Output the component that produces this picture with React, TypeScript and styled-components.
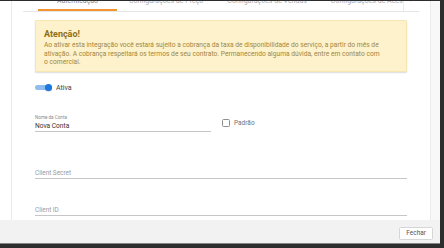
import { useLayoutEffect, useRef } from "react";
import styled, { createGlobalStyle } from "styled-components";
import { ChevronLeft, ChevronRight } from "lucide-react";

const tabs = [
  "Autenticação",
  "Configurações de Preço",
  "Configurações de Vendas",
  "Configurações de Acesso",
];

const App = () => {
  const bodyRef = useRef<HTMLDivElement>(null);

  useLayoutEffect(() => {
    if (bodyRef.current) bodyRef.current.scrollTop = 95;
  }, []);

  return (
    <>
      <GlobalStyle />
      <Page>
        <Modal>
          <ModalBody ref={bodyRef}>
            <Content>
              <Panel>
                <DialogHeader>
                  <DialogTitle>Configurar Integração</DialogTitle>
                </DialogHeader>

                <TabBar>
                  <ScrollButton $disabled>
                    <ChevronLeft size={8} strokeWidth={2} />
                  </ScrollButton>
                  <TabScroller>
                    {tabs.map((tab, i) => (
                      <Tab key={tab} $active={i === 0}>
                        {tab}
                      </Tab>
                    ))}
                  </TabScroller>
                  <ScrollButton $bordered>
                    <ChevronRight size={8} strokeWidth={2} />
                  </ScrollButton>
                </TabBar>

                <Section>
                  <Alert>
                    <AlertTitle>Atenção!</AlertTitle>
                    <AlertText>
                      Ao ativar esta integração você estará sujeito a cobrança da
                      taxa de disponibilidade do serviço, a partir do mês de
                      ativação. A cobrança respeitará os termos de seu contrato.
                      Permanecendo alguma dúvida, entre em contato com{" "}
                      <NoWrap>o comercial.</NoWrap>
                    </AlertText>
                  </Alert>

                  <SwitchRow>
                    <SwitchTrack>
                      <SwitchThumb />
                    </SwitchTrack>
                    <SwitchLabel>Ativa</SwitchLabel>
                  </SwitchRow>

                  <FieldRow>
                    <Field $width="176px">
                      <FieldLabel>Nome da Conta</FieldLabel>
                      <Input defaultValue="Nova Conta" />
                    </Field>
                    <CheckLabel>
                      <CheckBox />
                      <span>Padrão</span>
                    </CheckLabel>
                  </FieldRow>

                  <PlainInput $gap="37px" placeholder="Client Secret" />
                  <PlainInput $gap="27px" placeholder="Client ID" />
                  <PlainInput $gap="27px" placeholder="Client Key" />
                </Section>
              </Panel>
            </Content>
          </ModalBody>

          <Footer>
            <FooterButton>Fechar</FooterButton>
          </Footer>
        </Modal>
      </Page>
    </>
  );
};

export default App;

const GlobalStyle = createGlobalStyle`
  html, body {
    margin: 0;
    padding: 0;
  }

  body {
    width: 444px;
    height: 248px;
    overflow: hidden;
    background: #2d2d2d;
    font-family: Roboto, "Liberation Sans", Arial, sans-serif;
  }

  * {
    box-sizing: border-box;
  }
`;

const Page = styled.div`
  display: flex;
  height: 248px;
  padding: 1px 4px 5px 0;
`;

const Modal = styled.div`
  width: 440px;
  display: flex;
  flex-direction: column;
  background: #fff;
  box-shadow: 0 1px 0 #858585;
`;

const ModalBody = styled.div`
  flex: 1;
  min-height: 0;
  overflow-y: scroll;

  &::-webkit-scrollbar {
    width: 10px;
  }

  &::-webkit-scrollbar-track {
    background: #f1f1f1;
  }

  &::-webkit-scrollbar-thumb {
    background: #c1c1c1;
  }

  &::-webkit-scrollbar-button:vertical:start:increment,
  &::-webkit-scrollbar-button:vertical:end:decrement {
    display: none;
  }

  &::-webkit-scrollbar-button:vertical:start:decrement {
    display: block;
    height: 10px;
    background-color: #f1f1f1;
    background-image: linear-gradient(to bottom right, transparent 50%, #a3a3a3 50%),
      linear-gradient(to bottom left, transparent 50%, #a3a3a3 50%);
    background-size: 3px 3px;
    background-repeat: no-repeat;
    background-position: 2px 3px, 5px 3px;
  }

  &::-webkit-scrollbar-button:vertical:end:increment {
    display: block;
    height: 10px;
    background-color: #f1f1f1;
    background-image: linear-gradient(to top right, transparent 50%, #a3a3a3 50%),
      linear-gradient(to top left, transparent 50%, #a3a3a3 50%);
    background-size: 3px 3px;
    background-repeat: no-repeat;
    background-position: 2px 3px, 5px 3px;
  }
`;

const Content = styled.div`
  padding: 0 9px 0 11px;
  background: linear-gradient(to left, #f8f8f8 9px, #fff 9px);
`;

const Panel = styled.div`
  background: #fff;
  border-left: 1px solid #ebebeb;
  border-right: 1px solid #ebebeb;
  padding: 0 11px 40px;
`;

const DialogHeader = styled.div`
  height: 88px;
  display: flex;
  align-items: center;
`;

const DialogTitle = styled.h2`
  margin: 0;
  font-size: 11px;
  font-weight: 500;
  color: #444;
`;

const TabBar = styled.div`
  display: flex;
  height: 18px;
  border-bottom: 1px solid #e6e6e6;
`;

const ScrollButton = styled.div<{ $disabled?: boolean; $bordered?: boolean }>`
  flex: none;
  width: ${(p) => (p.$bordered ? "16px" : "15px")};
  display: flex;
  align-items: center;
  justify-content: center;
  padding-bottom: 8px;
  color: ${(p) => (p.$disabled ? "#cfcfcf" : "#8a8a8a")};
  border-left: ${(p) => (p.$bordered ? "1px solid #ececec" : "none")};
`;

const TabScroller = styled.div`
  flex: 1;
  min-width: 0;
  display: flex;
  overflow: hidden;
`;

const Tab = styled.div<{ $active?: boolean }>`
  flex: none;
  min-width: 79px;
  height: 17px;
  padding: 0 12px;
  line-height: 14px;
  font-size: 7px;
  text-align: center;
  white-space: nowrap;
  color: ${(p) => (p.$active ? "#8c8c8c" : "#ababab")};
  border-bottom: 2px solid ${(p) => (p.$active ? "#f39433" : "transparent")};
`;

const Section = styled.div`
  padding: 8px 12px 0;
  display: flex;
  flex-direction: column;
`;

const Alert = styled.div`
  padding: 8px 9px 4px 8px;
  background: #fdf2cc;
  border: 1px solid #f5e6b2;
  border-radius: 1px;
  box-shadow: 0 1px 1.5px rgba(0, 0, 0, 0.14);
`;

const AlertTitle = styled.div`
  font-size: 9px;
  line-height: 11px;
  font-weight: 700;
  color: #8e6f18;
`;

const AlertText = styled.div`
  margin-top: 1px;
  font-size: 6.7px;
  line-height: 8.5px;
  color: #a3873d;
`;

const NoWrap = styled.span`
  white-space: nowrap;
`;

const SwitchRow = styled.div`
  display: flex;
  align-items: center;
  gap: 4px;
  height: 10px;
  margin-top: 11px;
`;

const SwitchTrack = styled.div`
  width: 17px;
  height: 5px;
  border-radius: 3px;
  background: #8fbdf0;
  display: flex;
  align-items: center;
  justify-content: flex-end;
`;

const SwitchThumb = styled.div`
  width: 7px;
  height: 7px;
  margin: -1px 0;
  border-radius: 50%;
  background: #1f78de;
  box-shadow: 0 0.5px 1px rgba(0, 0, 0, 0.3);
`;

const SwitchLabel = styled.span`
  font-size: 7px;
  color: #444;
`;

const FieldRow = styled.div`
  display: flex;
  align-items: center;
  gap: 11px;
  margin-top: 22px;
`;

const Field = styled.label<{ $width: string }>`
  width: ${(p) => p.$width};
  display: flex;
  flex-direction: column;
  gap: 1px;
`;

const FieldLabel = styled.span`
  font-size: 4.6px;
  line-height: 6px;
  color: #8a8a8a;
`;

const Input = styled.input`
  width: 100%;
  height: 10px;
  padding: 0 0 1px;
  border: none;
  border-bottom: 1px solid #c6c6c6;
  background: transparent;
  outline: none;
  font-family: inherit;
  font-size: 6.6px;
  color: #333;
`;

const PlainInput = styled(Input)<{ $gap: string }>`
  margin-top: ${(p) => p.$gap};
  font-size: 6.4px;

  &::placeholder {
    color: #9b9b9b;
  }
`;

const CheckLabel = styled.label`
  display: flex;
  align-items: center;
  gap: 4px;
  font-size: 6.5px;
  color: #727272;
`;

const CheckBox = styled.span`
  width: 8px;
  height: 7.5px;
  border: 1px solid #8e8e8e;
  border-radius: 1.5px;
`;

const Footer = styled.div`
  height: 23px;
  flex: none;
  display: flex;
  align-items: center;
  justify-content: flex-end;
  padding: 3px 7px 0 0;
  background: #f2f2f2;
`;

const FooterButton = styled.button`
  height: 13px;
  padding: 0 6px;
  font-family: inherit;
  font-size: 6.5px;
  color: #555;
  background: #fff;
  border: 1px solid #d6d6d6;
  border-radius: 1.5px;
`;
